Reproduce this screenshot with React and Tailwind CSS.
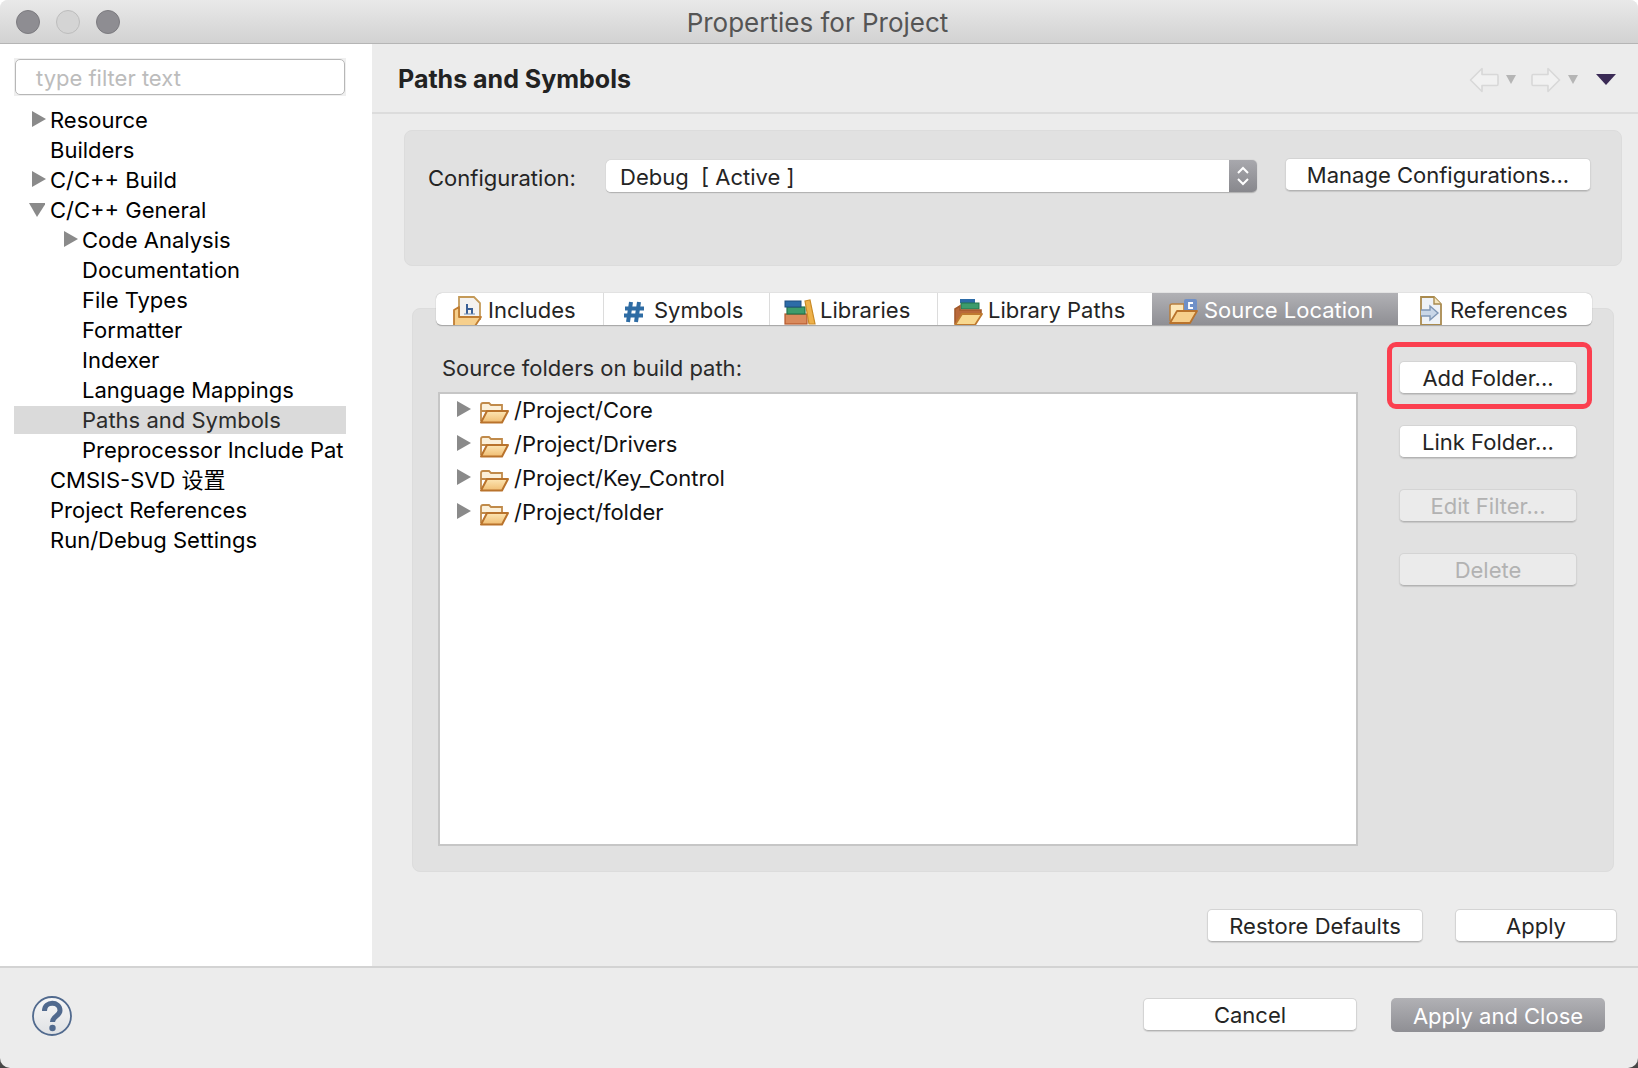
import React from "react";

const font = "font-['Inter','Noto_Sans_CJK_SC',sans-serif]";

const treeItems = [
  { label: "Resource", indent: 0, arrow: "right" },
  { label: "Builders", indent: 0 },
  { label: "C/C++ Build", indent: 0, arrow: "right" },
  { label: "C/C++ General", indent: 0, arrow: "down" },
  { label: "Code Analysis", indent: 1, arrow: "right" },
  { label: "Documentation", indent: 1 },
  { label: "File Types", indent: 1 },
  { label: "Formatter", indent: 1 },
  { label: "Indexer", indent: 1 },
  { label: "Language Mappings", indent: 1 },
  { label: "Paths and Symbols", indent: 1, selected: true },
  { label: "Preprocessor Include Pat", indent: 1 },
  { label: "CMSIS-SVD 设置", indent: 0 },
  { label: "Project References", indent: 0 },
  { label: "Run/Debug Settings", indent: 0 },
];

const sourceFolders = ["/Project/Core", "/Project/Drivers", "/Project/Key_Control", "/Project/folder"];

const Arrow = ({ dir = "right", className = "" }) => (
  <svg width="16" height="18" viewBox="0 0 16 18" className={className}>
    {dir === "right" ? <path d="M1 1 L15 9 L1 17 Z" fill="#8a8a8a" /> : <path d="M0 2 L17 2 L8 16 Z" fill="#8a8a8a" />}
  </svg>
);

// eclipse style open folder, drawn on a 30x24 box
const FolderOpen = ({ className = "" }) => (
  <svg width="30" height="24" viewBox="0 0 30 24" className={className}>
    <defs>
      <linearGradient id="folderFront" x1="0" y1="0" x2="0" y2="1">
        <stop offset="0" stopColor="#fde6b4" />
        <stop offset="1" stopColor="#f0bd72" />
      </linearGradient>
    </defs>
    <path d="M2 21 V5 Q2 3 4 3 H10 L12 5 H23 V11 H2 Z" fill="#fbf0da" stroke="#c08a4a" strokeWidth="1.8" />
    <path d="M2 22.5 L8 11 H29 L23 22.5 Z" fill="url(#folderFront)" stroke="#b9732c" strokeWidth="2" strokeLinejoin="round" />
  </svg>
);

const IncludesIcon = () => (
  <svg width="30" height="32" viewBox="0 0 30 32">
    <path d="M7 2 H22 L28 8 V24 H7 Z" fill="#f4f2f0" stroke="#c49a58" strokeWidth="1.8" />
    <path d="M15 9 V19 M15 14 H20 V19" fill="none" stroke="#3a5f95" strokeWidth="2" />
    <path d="M12 19 H23" stroke="#6d8db8" strokeWidth="1.2" />
    <path d="M2 31 V15 L7 12 V22 H29 L23 31 Z" fill="#f6cf8c" stroke="#c07d32" strokeWidth="1.8" strokeLinejoin="round" />
  </svg>
);

const BooksIcon = () => (
  <svg width="32" height="26" viewBox="0 0 32 26">
    <rect x="1" y="15" width="22" height="10" fill="#d98a5c" stroke="#b4572a" strokeWidth="1.2" />
    <rect x="3" y="8" width="18" height="7" fill="#3d9c6c" stroke="#25744c" strokeWidth="1.2" />
    <rect x="1" y="2" width="16" height="6" fill="#2d6ca8" stroke="#204e80" strokeWidth="1" />
    <path d="M21 2 L26 1 L31 25 H25 Z" fill="#eeb14a" stroke="#c98a26" strokeWidth="1.2" />
  </svg>
);

const LibPathsIcon = () => (
  <svg width="30" height="28" viewBox="0 0 30 28">
    <rect x="7" y="1" width="15" height="4" fill="#2d6ca8" />
    <rect x="8" y="5" width="18" height="6" fill="#3d9c6c" stroke="#25744c" />
    <path d="M2 26 V11 L7 8 V12 H28 V16" fill="#b9693a" stroke="#a25a2c" strokeWidth="1.6" />
    <path d="M2 27 L9 16 H29 L22 27 Z" fill="#f8d88f" stroke="#bf7a30" strokeWidth="1.8" strokeLinejoin="round" />
  </svg>
);

const SourceFolderIcon = () => (
  <svg width="30" height="26" viewBox="0 0 30 26">
    <path d="M2 23 V8 Q2 6 4 6 H16 V12" fill="#fde7b8" stroke="#b9803f" strokeWidth="1.6" />
    <rect x="16" y="1" width="13" height="13" rx="2" fill="#6f90c8" />
    <path d="M25 5 H21 V10 H25" fill="none" stroke="#fff" strokeWidth="1.8" />
    <path d="M2 25 L9 13 H29 L22 25 Z" fill="#f6cf8c" stroke="#b9732c" strokeWidth="1.8" strokeLinejoin="round" />
  </svg>
);

const ReferencesIcon = () => (
  <svg width="24" height="30" viewBox="0 0 24 30">
    <path d="M2 1 H15 L22 8 V29 H2 Z" fill="#eef2f7" stroke="#a98a4e" strokeWidth="1.8" />
    <path d="M15 1 V8 H22" fill="#f5e6bd" stroke="#a98a4e" strokeWidth="1.4" />
    <path d="M2 14 H11 V10 L19 17 L11 24 V20 H2" fill="#c9d7e8" stroke="#7f97b5" strokeWidth="1.4" />
  </svg>
);

const HashIcon = () => (
  <svg width="22" height="22" viewBox="0 0 22 22">
    <path d="M8 1 L5 21 M16 1 L13 21 M2 7.5 H21 M1 14.5 H20" stroke="#2e6ca4" strokeWidth="4" fill="none" />
  </svg>
);

const NavArrow = ({ flip }) => (
  <svg width="30" height="26" viewBox="0 0 30 26" className={flip ? "-scale-x-100" : ""}>
    <path d="M1.5 13 L13 1.5 V7.5 H28 Q29 7.5 29 9 V17 Q29 18.5 28 18.5 H13 V24.5 Z" fill="#f1f1f1" stroke="#d8d8d8" strokeWidth="1.6" strokeLinejoin="round" />
  </svg>
);

const Btn = ({ children, className = "", disabled }) => (
  <button
    className={`flex items-center justify-center h-[33px] pt-[1px] rounded-[5px] border border-[#d4d4d4] border-b-[#b3b3b3] shadow-[0_1px_1px_rgba(0,0,0,0.12)] text-[22px] leading-none ${
      disabled ? "bg-[#ebebeb] text-[#b2b2b2]" : "bg-white text-[#242424]"
    } ${className}`}
  >
    {children}
  </button>
);

const tabs = [
  { label: "Includes", icon: <IncludesIcon />, w: "w-[168px]", gap: "gap-[6px] pl-[16px]", nudge: "mt-[1px]" },
  { label: "Symbols", icon: <HashIcon />, w: "w-[166px]", gap: "gap-[9px] pl-[19px]", nudge: "mt-[3px]" },
  { label: "Libraries", icon: <BooksIcon />, w: "w-[168px]", gap: "gap-[4px] pl-[14px]", nudge: "mt-[3px]" },
  { label: "Library Paths", icon: <LibPathsIcon />, w: "w-[214px]", gap: "gap-[5px] pl-[15px]", nudge: "mt-[4px]" },
  { label: "Source Location", icon: <SourceFolderIcon />, w: "w-[246px]", gap: "gap-[6px] pl-[16px]", nudge: "mt-[1px]", active: true },
  { label: "References", icon: <ReferencesIcon />, w: "w-[194px]", gap: "gap-[7px] pl-[21px]", nudge: "mt-[2px]" },
];

export default function App() {
  return (
    <div className="w-[1638px] h-[1068px] bg-linear-to-b from-white from-90% to-[#444]">
      <div className={`${font} w-full h-full bg-[#ececec] overflow-hidden rounded-t-[8px] rounded-b-[10px] text-[22px] text-black`}>
        {/* title bar */}
        <div className="relative h-[44px] flex items-center justify-center pt-[1px] pr-[3px] border-b border-[#b5b5b5] bg-linear-to-b from-[#e9e9e9] to-[#d2d2d2]">
          <div className="absolute left-[16px] top-[10px] flex gap-[16px]">
            <span className="w-[24px] h-[24px] rounded-full bg-[#8e8d92] border border-[#7c7b80]" />
            <span className="w-[24px] h-[24px] rounded-full bg-[#d4d4d4] border border-[#bdbdbd]" />
            <span className="w-[24px] h-[24px] rounded-full bg-[#8e8d92] border border-[#7c7b80]" />
          </div>
          <span className="text-[#555] text-[26px]">Properties for Project</span>
        </div>

        <div className="flex h-[922px]">
          {/* left tree */}
          <div className="w-[372px] shrink-0 bg-white pt-[14px] pl-[14px] overflow-hidden">
            <div className="w-[332px] h-[38px] bg-[#efefef] p-[1px]">
              <div className="h-full rounded-[5px] border border-[#b7b7b7] bg-white pl-[20px] pt-[3px] flex items-center text-[#bcbcbc]">
                type filter text
              </div>
            </div>
            <div className="mt-[9px] w-[332px] overflow-hidden">
              {treeItems.map((t) => (
                <div key={t.label} className="relative h-[30px] py-[1px]">
                  <div className={`h-full flex items-center whitespace-nowrap ${t.selected ? "bg-[#dadada] text-[#2b2b2b]" : ""} ${t.indent ? "pl-[68px]" : "pl-[36px]"}`}>
                    {t.arrow && <Arrow dir={t.arrow} className={`absolute ${t.arrow === "down" ? "top-[6px] left-[15px]" : t.indent ? "top-[5px] left-[49px]" : "top-[5px] left-[17px]"}`} />}
                    {t.label}
                  </div>
                </div>
              ))}
            </div>
          </div>

          {/* right side */}
          <div className="flex-1 min-w-0 flex flex-col">
            <div className="h-[70px] flex items-center justify-between border-b-2 border-[#dcdcdc] pl-[26px] pr-[22px]">
              <span className="font-bold text-[25px] text-[#222] pt-[3px]">Paths and Symbols</span>
              <div className="flex items-center mt-[3px]">
                <NavArrow />
                <span className="ml-[7px] w-0 h-0 border-x-[5px] border-x-transparent border-t-[9px] border-t-[#b5b5b5]" />
                <span className="ml-[15px]"><NavArrow flip /></span>
                <span className="ml-[7px] w-0 h-0 border-x-[5px] border-x-transparent border-t-[9px] border-t-[#b5b5b5]" />
                <span className="ml-[18px] w-0 h-0 border-x-[10px] border-x-transparent border-t-[11px] border-t-[#3a2a55]" />
              </div>
            </div>

            {/* configuration group */}
            <div className="ml-[32px] mr-[16px] mt-[16px] h-[136px] rounded-[8px] bg-[#e1e1e1] border border-[#dcdcdc] flex items-start pl-[23px] pt-[27px]">
              <span className="w-[178px] h-[39px] pt-[2px] flex items-center text-[#242424]">Configuration:</span>
              <div className="w-[651px] h-[33px] flex rounded-[5px] overflow-hidden border-b border-[#b3b3b3] shadow-[0_0_1px_rgba(0,0,0,0.3)] mt-[2px]">
                <div className="flex-1 bg-white pl-[14px] pt-[2px] flex items-center text-[#242424] whitespace-pre">Debug  [ Active ]</div>
                <div className="w-[28px] bg-linear-to-b from-[#a8a8ad] to-[#88888d] flex items-center justify-center">
                  <svg width="14" height="22" viewBox="0 0 14 22">
                    <path d="M2 8 L7 3 L12 8 M2 14 L7 19 L12 14" fill="none" stroke="#fff" strokeWidth="2" />
                  </svg>
                </div>
              </div>
              <Btn className="ml-[28px] w-[306px]">Manage Configurations...</Btn>
            </div>

            {/* tabs and panel */}
            <div className="relative ml-[40px] mr-[24px] mt-[42px] h-[564px] rounded-[8px] bg-[#e1e1e1] border border-[#dcdcdc]">
              <div className="absolute -top-[16px] left-[23px] w-[1156px] h-[33px] pb-0 flex rounded-[6px] overflow-hidden border-b border-[#aaa] shadow-[0_0_1px_rgba(0,0,0,0.4)] bg-white">
                {tabs.map((t, i) => (
                  <div
                    key={t.label}
                    className={`${t.w} ${t.gap} shrink-0 h-full pt-[2px] flex items-center whitespace-nowrap ${i < 3 ? "border-r border-[#dcdcdc]" : ""} ${
                      t.active ? "bg-linear-to-b from-[#b1b1b5] to-[#8f8f94] text-white" : "text-[#242424]"
                    }`}
                  >
                    <span className={`shrink-0 ${t.nudge}`}>{t.icon}</span>
                    <span>{t.label}</span>
                  </div>
                ))}
              </div>

              <div className="flex pt-[43px] pl-[25px]">
                <div className="w-[920px] shrink-0">
                  <div className="h-[34px] flex items-center pl-[4px] pb-[2px] text-[#2a2a2a]">Source folders on build path:</div>
                  <div className="mt-[6px] h-[454px] bg-white border-2 border-[#c6c6c6]">
                    <div className="-mt-[1px]">
                      {sourceFolders.map((f) => (
                        <div key={f} className="h-[34px] flex items-center pl-[16px] whitespace-nowrap text-[#111]">
                          <Arrow className="shrink-0 -mt-[2px]" />
                          <FolderOpen className="ml-[7px] mt-[3px] shrink-0" />
                          <span className="ml-[5px]">{f}</span>
                        </div>
                      ))}
                    </div>
                  </div>
                </div>
                <div className="relative ml-[41px] w-[178px] pt-[9px] flex flex-col gap-[31px]">
                  <div className="absolute left-[-12px] top-[-10px] w-[205px] h-[67px] rounded-[9px] border-[5px] border-[#fb3f4f]" />
                  <Btn className="w-full">Add Folder...</Btn>
                  <Btn className="w-full">Link Folder...</Btn>
                  <Btn className="w-full" disabled>Edit Filter...</Btn>
                  <Btn className="w-full" disabled>Delete</Btn>
                </div>
              </div>
            </div>

            <div className="flex justify-end gap-[32px] mt-[37px] pr-[21px]">
              <Btn className="w-[216px]">Restore Defaults</Btn>
              <Btn className="w-[162px]">Apply</Btn>
            </div>
          </div>
        </div>

        {/* footer */}
        <div className="h-[102px] border-t-2 border-[#d3d3d3] flex items-start pt-[30px] pl-[32px] pr-[33px]">
          <svg width="40" height="40" viewBox="0 0 40 40" className="-mt-[2px]">
            <defs>
              <linearGradient id="helpBg" x1="0" y1="0" x2="0" y2="1">
                <stop offset="0" stopColor="#f8f8f8" />
                <stop offset="1" stopColor="#dfe1e4" />
              </linearGradient>
            </defs>
            <circle cx="20" cy="20" r="19" fill="url(#helpBg)" stroke="#516a8e" strokeWidth="1.8" />
            <path d="M12.5 15 C12.5 4.5 28 5 28 14.5 C28 20 20.5 20 20.5 26" fill="none" stroke="#516a8e" strokeWidth="5" />
            <circle cx="20.5" cy="32" r="3.2" fill="#516a8e" />
          </svg>
          <div className="ml-auto flex gap-[34px]">
            <Btn className="w-[214px]">Cancel</Btn>
            <button className="w-[214px] h-[34px] pt-[1px] rounded-[5px] bg-linear-to-b from-[#b1b1b5] to-[#8f8f94] text-white text-[22px] leading-none">Apply and Close</button>
          </div>
        </div>
      </div>
    </div>
  );
}
